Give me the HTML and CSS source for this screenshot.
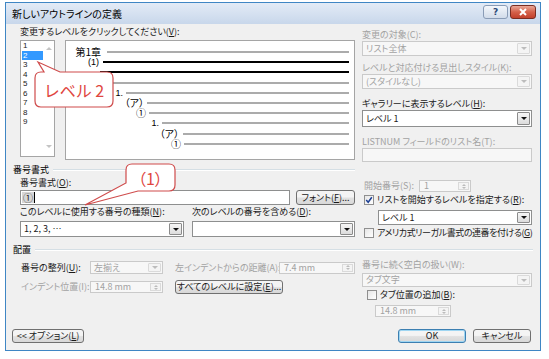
FILE: index.html
```html
<!DOCTYPE html>
<html lang="ja">
<head>
    <meta charset="UTF-8">
    <meta name="viewport" content="width=device-width, initial-scale=1.0">
    <title>新しいアウトラインの定義</title>
    <link rel="stylesheet" href="styles.css">
</head>
<body>
    <div class="dialog">
        <div class="titlebar">
            <span class="title">新しいアウトラインの定義</span>
            <span class="cap-btn help">?</span>
            <span class="cap-btn close">
                <svg width="10" height="8" viewBox="0 0 10 8"><path d="M2 1 L8 7 M8 1 L2 7" stroke="#fff" stroke-width="2" fill="none"/></svg>
            </span>
        </div>
        <div class="body">
            <!-- level list + preview, list wide settings -->
            <div class="top">
                <div class="top-left">
                    <div class="label">変更するレベルをクリックしてください(<u>V</u>):</div>
                    <div class="level-row">
                        <div class="level-list">
                            <div class="items">
                                <div class="item">1</div>
                                <div class="item sel">2</div>
                                <div class="item">3</div>
                                <div class="item">4</div>
                                <div class="item">5</div>
                                <div class="item">6</div>
                                <div class="item">7</div>
                                <div class="item">8</div>
                                <div class="item">9</div>
                            </div>
                            <div class="vscroll">
                                <span class="arrow up"></span>
                                <span class="arrow down"></span>
                            </div>
                        </div>
                        <div class="preview">
                            <div class="pv l1"><span class="num">第1章</span><span class="bar"></span></div>
                            <div class="pv l2 on"><span class="num latin">(1)</span><span class="bar"></span></div>
                            <div class="pv l3 on"><span class="num"></span><span class="bar"></span></div>
                            <div class="pv l4"><span class="num"></span><span class="bar"></span></div>
                            <div class="pv l5"><span class="num latin">1.</span><span class="bar"></span></div>
                            <div class="pv l6"><span class="num">（ア）</span><span class="bar"></span></div>
                            <div class="pv l7"><span class="num">①</span><span class="bar"></span></div>
                            <div class="pv l8"><span class="num latin">1.</span><span class="bar"></span></div>
                            <div class="pv l9"><span class="num">（ア）</span><span class="bar"></span></div>
                            <div class="pv l10"><span class="num">①</span><span class="bar"></span></div>
                        </div>
                    </div>
                </div>
                <div class="top-right">
                    <div class="label dis">変更の対象(C):</div>
                    <div class="combo dis h15"><span class="val">リスト全体</span><span class="drop"></span></div>
                    <div class="label dis gap6">レベルと対応付ける見出しスタイル(K):</div>
                    <div class="combo dis h15"><span class="val">(スタイルなし)</span><span class="drop"></span></div>
                    <div class="label gap9">ギャラリーに表示するレベル(<u>H</u>):</div>
                    <div class="combo h17"><span class="val">レベル 1</span><span class="drop"></span></div>
                    <div class="label dis gap9">LISTNUM フィールドのリスト名(T):</div>
                    <div class="textbox dis"></div>
                </div>
            </div>

            <!-- 番号書式 -->
            <div class="fmt">
                <div class="fmt-left">
                    <div class="group-head">番号書式</div>
                    <div class="inner">
                        <div class="label gap1">番号書式(<u>O</u>):</div>
                        <div class="format-row">
                            <div class="textbox fmt-box"><span class="token">①</span><span class="caret"></span></div>
                            <div class="btn font-btn">フォント(<u>F</u>)...</div>
                        </div>
                        <div class="type-row">
                            <div>
                                <div class="label">このレベルに使用する番号の種類(<u>N</u>):</div>
                                <div class="combo h16"><span class="val">1, 2, 3, …</span><span class="drop"></span></div>
                            </div>
                            <div>
                                <div class="label">次のレベルの番号を含める(<u>D</u>):</div>
                                <div class="combo h16"><span class="val"></span><span class="drop"></span></div>
                            </div>
                        </div>
                    </div>
                </div>
                <div class="fmt-right">
                    <div class="start-row">
                        <span class="label dis start-label">開始番号(S):</span>
                        <div class="spin dis start-spin"><span class="val">1</span><span class="spin-btns"><span class="arrow up"></span><span class="arrow down"></span></span></div>
                    </div>
                    <div class="check-row">
                        <span class="check">
                            <svg width="8" height="8" viewBox="0 0 8 8"><path d="M1.2 4 L3.2 6.3 L6.8 1.3" stroke="#1c3f94" stroke-width="1.5" fill="none"/></svg>
                        </span>
                        <span>リストを開始するレベルを指定する(<u>R</u>):</span>
                    </div>
                    <div class="combo h15 restart-combo"><span class="val">レベル 1</span><span class="drop"></span></div>
                    <div class="check-row">
                        <span class="check"></span>
                        <span class="tight">アメリカ式リーガル書式の連番を付ける(<u>G</u>)</span>
                    </div>
                </div>
            </div>

            <!-- 配置 -->
            <div class="lay">
                <div class="group-head">配置</div>
                <div class="lay-body">
                    <div class="lay-left">
                        <div class="lay-row">
                            <span class="lay-label">番号の整列(<u>U</u>):</span>
                            <div class="combo dis align-combo"><span class="val">左揃え</span><span class="drop"></span></div>
                            <span class="label dis dist-label">左インデントからの距離(A):</span>
                            <div class="spin dis dist-spin"><span class="val">7.4 mm</span><span class="spin-btns"><span class="arrow up"></span><span class="arrow down"></span></span></div>
                        </div>
                        <div class="lay-row second">
                            <span class="lay-label dis">インデント位置(I):</span>
                            <div class="spin dis indent-spin"><span class="val">14.8 mm</span><span class="spin-btns"><span class="arrow up"></span><span class="arrow down"></span></span></div>
                            <div class="btn all-btn">すべてのレベルに設定(<u>E</u>)...</div>
                        </div>
                    </div>
                    <div class="lay-right">
                        <div class="label dis">番号に続く空白の扱い(W):</div>
                        <div class="combo dis tab-combo"><span class="val">タブ文字</span><span class="drop"></span></div>
                        <div class="check-row tab-check">
                            <span class="check"></span>
                            <span>タブ位置の追加(<u>B</u>):</span>
                        </div>
                        <div class="spin dis tab-spin"><span class="val">14.8 mm</span><span class="spin-btns"><span class="arrow up"></span><span class="arrow down"></span></span></div>
                    </div>
                </div>
            </div>

            <div class="footer">
                <div class="btn opt-btn">&lt;&lt; オプション(<u>L</u>)</div>
                <div class="btn default ok-btn">OK</div>
                <div class="btn cancel-btn">キャンセル</div>
            </div>
        </div>
    </div>

    <!-- annotation callouts drawn over the dialog -->
    <svg class="callouts" width="549" height="359" viewBox="0 0 549 359">
        <path d="M41 72 L44 72 L38 62 L60 72 L107 72 Q113 72 113 78 L113 101 Q113 107 107 107 L41 107 Q35 107 35 101 L35 78 Q35 72 41 72 Z"/>
        <path d="M132 164 L169 164 Q175 164 175 170 L175 185 Q175 191 169 191 L138 191 L85 205 L126 183 L126 170 Q126 164 132 164 Z"/>
    </svg>
    <div class="callout-text level-note">レベル 2</div>
    <div class="callout-text num-note">（1）</div>
</body>
</html>
```

FILE: styles.css
```css
* {
    box-sizing: border-box;
}

body {
    margin: 0;
    background: #fff;
    font-family: "Noto Sans CJK JP", "Noto Sans", sans-serif;
    font-feature-settings: "palt";
    font-size: 9px;
    line-height: 12px;
    color: #1a1a1a;
}

u {
    text-decoration: underline;
    text-underline-offset: 1px;
}

.dialog {
    margin: 2px 0 0 5px;
    width: 536px;
    height: 349px;
    border: 1px solid #3f86c4;
    background: #f0f0f0;
    display: flex;
    flex-direction: column;
}

/* title bar */
.titlebar {
    height: 21px;
    display: flex;
    align-items: flex-start;
    padding: 0 4px 0 6px;
    background: linear-gradient(#e3ebf6, #c8d7eb);
}
.title {
    flex: 1;
    font-size: 10px;
    line-height: 21px;
    color: #000;
}
.cap-btn {
    margin-top: 2px;
    height: 14px;
    border-radius: 3px;
    display: flex;
    align-items: center;
    justify-content: center;
}
.help {
    width: 25px;
    margin-right: 2px;
    border: 1px solid #8a9cb6;
    background: linear-gradient(#f4f7fb, #d2dcea);
    color: #2b4a77;
    font-size: 9px;
    font-weight: bold;
    font-family: "DejaVu Sans", sans-serif;
}
.close {
    width: 26px;
    border: 1px solid #7a2d22;
    background: linear-gradient(#e9a897, #d5614a 50%, #c2412c);
}

.body {
    flex: 1;
    display: flex;
    flex-direction: column;
    padding: 0 7px 7px 7px;
}

.label {
    height: 12px;
    white-space: nowrap;
}
.dis {
    color: #a2a2a2;
}
.tight {
    letter-spacing: -0.45px;
}
.gap1 { margin-top: 1px; }
.gap6 { margin-top: 6px; }
.gap9 { margin-top: 9px; }

/* form controls */
.combo {
    display: flex;
    align-items: stretch;
    border: 1px solid #8e8f8f;
    background: #fff;
}
.combo.dis {
    border-color: #cacaca;
    background: #f7f7f7;
}
.combo .val {
    flex: 1;
    padding-left: 3px;
    display: flex;
    align-items: center;
    white-space: nowrap;
    overflow: hidden;
}
.combo .drop {
    flex: none;
    width: 13px;
    margin: 1px;
    border: 1px solid #8b8b8b;
    border-radius: 1px;
    background: linear-gradient(#f6f6f6, #dcdcdc);
    display: flex;
    align-items: center;
    justify-content: center;
}
.combo .drop::after {
    content: "";
    border-left: 3px solid transparent;
    border-right: 3px solid transparent;
    border-top: 3px solid #111;
}
.combo.dis .drop {
    border-color: #dadada;
    background: #f4f4f4;
}
.combo.dis .drop::after {
    border-top-color: #bcbcbc;
}
.h15 { height: 15px; }
.h16 { height: 16px; }
.h17 { height: 17px; }

.textbox {
    height: 14px;
    border: 1px solid #8e8f8f;
    background: #fff;
}
.textbox.dis {
    border-color: #cacaca;
    background: #f7f7f7;
}

.spin {
    display: flex;
    border: 1px solid #8e8f8f;
    background: #fff;
}
.spin.dis {
    border-color: #cacaca;
    background: #f7f7f7;
}
.spin .val {
    flex: 1;
    padding-left: 4px;
    display: flex;
    align-items: center;
    white-space: nowrap;
}
.spin-btns {
    flex: none;
    width: 11px;
    margin: 1px;
    display: flex;
    flex-direction: column;
    border: 1px solid #dadada;
    background: #f4f4f4;
}
.spin-btns .arrow {
    flex: 1;
    display: flex;
    align-items: center;
    justify-content: center;
}
.spin-btns .arrow.up::after,
.spin-btns .arrow.down::after {
    content: "";
    border-left: 2px solid transparent;
    border-right: 2px solid transparent;
}
.spin-btns .arrow.up::after {
    border-bottom: 2px solid #bcbcbc;
}
.spin-btns .arrow.down::after {
    border-top: 2px solid #bcbcbc;
}

.btn {
    height: 14px;
    border: 1px solid #707070;
    border-radius: 3px;
    background: linear-gradient(#f4f4f4 45%, #e1e1e1 55%, #d8d8d8);
    display: flex;
    align-items: center;
    justify-content: center;
    white-space: nowrap;
}
.btn.default {
    border-color: #3c7fb1;
    box-shadow: inset 0 0 0 1px #9fd6f2;
}

.check-row {
    display: flex;
    align-items: center;
    height: 12px;
    margin-top: 2px;
    padding-left: 2px;
    gap: 3px;
    white-space: nowrap;
}
.check {
    flex: none;
    width: 10px;
    height: 10px;
    border: 1px solid #8f8f8f;
    background: linear-gradient(135deg, #e6e6e6, #fff);
    display: flex;
    align-items: center;
    justify-content: center;
}

/* top area */
.top {
    display: flex;
    gap: 7px;
    height: 140px;
}
.top-left {
    width: 342px;
    padding-left: 7px;
}
.top-left .label {
    margin-top: 2px;
}
.level-row {
    display: flex;
    margin-top: 2px;
}
.level-list {
    width: 35px;
    height: 117px;
    border: 1px solid #a5a5a5;
    background: #fff;
    display: flex;
}
.items {
    width: 22px;
    padding-left: 1px;
}
.item {
    height: 9.5px;
    line-height: 9.5px;
    padding-left: 1px;
    font-family: "Liberation Sans", sans-serif;
    font-size: 8px;
}
.item.sel {
    background: #3399ff;
    color: #fff;
}
.vscroll {
    flex: 1;
    display: flex;
    flex-direction: column;
    justify-content: space-between;
    align-items: center;
    padding: 6px 0 8px;
}
.vscroll .arrow {
    border-left: 3px solid transparent;
    border-right: 3px solid transparent;
}
.vscroll .arrow.up {
    border-bottom: 3px solid #c4c4c4;
}
.vscroll .arrow.down {
    border-top: 3px solid #c4c4c4;
}

.preview {
    width: 290px;
    height: 120px;
    margin-left: 10px;
    border: 1px solid #a5a5a5;
    background: #fff;
    padding: 6px 5px 0 0;
}
.pv {
    display: flex;
    align-items: center;
    height: 10.2px;
    font-size: 10px;
    line-height: 10px;
    color: #000;
}
.pv .num {
    flex: none;
    width: var(--w);
    height: 10px;
    text-align: right;
    white-space: nowrap;
}
.pv .num.latin {
    font-family: "Liberation Sans", sans-serif;
    font-size: 9px;
}
.pv .bar {
    flex: 1;
    height: 2px;
    margin-left: var(--g);
    background: #ababab;
}
.pv.on .bar {
    background: #000;
}
.l1 { --w: 35px; --g: 6px; }
.l2 { --w: 33px; --g: 4px; }
.l3 { --w: 34px; --g: 0px; }
.l4 { --w: 40px; --g: 4px; }
.l5 { --w: 57px; --g: 3px; }
.l6 { --w: 78px; --g: 3px; }
.l7 { --w: 80px; --g: 3px; }
.l8 { --w: 93px; --g: 3px; }
.l9 { --w: 113px; --g: 4px; }
.l10 { --w: 115px; --g: 3px; }

.top-right {
    width: 170px;
    padding-top: 5px;
}

/* group headers with etched line */
.group-head {
    display: flex;
    align-items: center;
    height: 12px;
    color: #000;
}
.group-head::after {
    content: "";
    flex: 1;
    margin-left: 4px;
    border-top: 1px solid #d5dfe5;
    border-bottom: 1px solid #fff;
}

/* 番号書式 */
.fmt {
    display: flex;
    gap: 7px;
    height: 76px;
}
.fmt-left {
    width: 342px;
}
.fmt-left .inner {
    padding-left: 7px;
}
.format-row {
    display: flex;
    height: 15px;
    margin-top: 1px;
}
.fmt-box {
    width: 270px;
    height: 15px;
    display: flex;
    align-items: center;
    padding-left: 1px;
}
.token {
    background: #d6d6d6;
    font-size: 10px;
    line-height: 11px;
    padding: 0 1px;
}
.caret {
    width: 1px;
    height: 11px;
    background: #000;
}
.font-btn {
    width: 59px;
    height: 15px;
    margin-left: 6px;
}
.type-row {
    display: grid;
    grid-template-columns: 164px 163px;
    column-gap: 8px;
    margin-top: 1px;
}
.type-row .combo {
    margin-top: 3px;
}

.fmt-right {
    width: 170px;
    padding-top: 16px;
}
.start-row {
    display: flex;
    align-items: center;
    height: 12px;
}
.start-label {
    width: 57px;
    padding-left: 2px;
}
.start-spin {
    width: 52px;
    height: 12px;
}
.restart-combo {
    margin: 4px 0 0 16px;
}

/* 配置 */
.lay {
    margin-top: 4px;
}
.lay-body {
    display: flex;
    gap: 7px;
}
.lay-left {
    width: 342px;
    padding: 5px 0 0 8px;
}
.lay-row {
    display: flex;
    align-items: center;
    height: 13px;
    white-space: nowrap;
}
.lay-row.second {
    height: 14px;
    margin-top: 6px;
}
.lay-label {
    width: 69px;
}
.align-combo {
    width: 73px;
    height: 13px;
}
.dist-label {
    width: 104px;
    margin-left: 12px;
    height: auto;
}
.dist-spin {
    width: 76px;
    height: 12px;
}
.indent-spin {
    width: 73px;
    height: 12px;
}
.all-btn {
    width: 108px;
    margin-left: 12px;
}

.lay-right {
    width: 170px;
    padding-top: 3px;
}
.tab-combo {
    height: 14px;
    margin-top: 2px;
}
.tab-check {
    padding-left: 5px;
}
.tab-spin {
    width: 76px;
    height: 12px;
    margin: 4px 0 0 13px;
}

/* bottom buttons */
.footer {
    margin-top: auto;
    display: flex;
}
.opt-btn {
    width: 72px;
    margin-left: -1px;
}
.ok-btn {
    width: 68px;
    margin-left: auto;
}
.cancel-btn {
    width: 58px;
    margin: 0 2px 0 7px;
}

/* callouts */
.callouts {
    position: absolute;
    left: 0;
    top: 0;
    pointer-events: none;
}
.callouts path {
    fill: #fff;
    stroke: #cf4b4b;
    stroke-width: 1.2;
}
.callout-text {
    position: absolute;
    display: flex;
    align-items: center;
    justify-content: center;
    font-size: 16px;
    line-height: 20px;
    color: #e0473f;
    font-feature-settings: normal;
}
.level-note {
    left: 35px;
    top: 72px;
    width: 78px;
    height: 35px;
}
.num-note {
    left: 126px;
    top: 164px;
    width: 49px;
    height: 27px;
    font-feature-settings: "palt";
}
```
